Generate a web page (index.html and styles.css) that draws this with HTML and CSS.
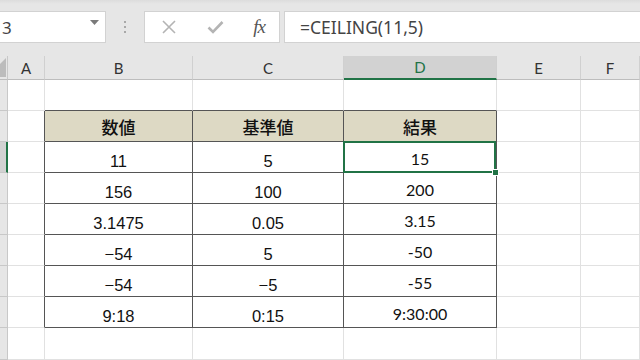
FILE: index.html
```html
<!DOCTYPE html>
<html lang="ja">
<head>
<meta charset="utf-8">
<link rel="stylesheet" href="styles.css">
</head>
<body>
<div class="toolbar">
  <div class="namebox"><span class="nb-text">3</span>
    <svg class="dd" width="9" height="5" viewBox="0 0 9 5"><path d="M0 0H9L4.5 5Z" fill="#7a7a7a"/></svg>
  </div>
  <div class="grip"><i></i><i></i><i></i></div>
  <div class="fxbox">
    <svg width="16" height="16" viewBox="0 0 16 16"><path d="M2 2L14 14M14 2L2 14" stroke="#b4b4b4" stroke-width="1.6" fill="none"/></svg>
    <svg width="17" height="14" viewBox="0 0 17 14"><path d="M1.5 7.5L6 12L15.5 2" stroke="#b4b4b4" stroke-width="2.6" fill="none"/></svg>
    <span class="fx">fx</span>
  </div>
  <div class="formula">=CEILING(11,5)</div>
</div>
<div class="sheet">
  <div class="row hdr">
    <div class="corner"></div>
    <div class="ch">A</div>
    <div class="ch">B</div>
    <div class="ch">C</div>
    <div class="ch sel">D</div>
    <div class="ch">E</div>
    <div class="ch">F</div>
  </div>
  <div class="row">
    <div class="rh"></div><div class="c"></div><div class="c tt"></div><div class="c tt"></div><div class="c tt"></div><div class="c"></div><div class="c"></div>
  </div>
  <div class="row">
    <div class="rh"></div><div class="c tl"></div><div class="c t th">数値</div><div class="c t th">基準値</div><div class="c t th">結果</div><div class="c"></div><div class="c"></div>
  </div>
  <div class="row">
    <div class="rh on"></div><div class="c tl"></div><div class="c t">11</div><div class="c t">5</div><div class="c t r cur">15</div><div class="c"></div><div class="c"></div>
  </div>
  <div class="row">
    <div class="rh"></div><div class="c tl"></div><div class="c t">156</div><div class="c t">100</div><div class="c t r">200</div><div class="c"></div><div class="c"></div>
  </div>
  <div class="row">
    <div class="rh"></div><div class="c tl"></div><div class="c t">3.1475</div><div class="c t">0.05</div><div class="c t r">3.15</div><div class="c"></div><div class="c"></div>
  </div>
  <div class="row">
    <div class="rh"></div><div class="c tl"></div><div class="c t">−54</div><div class="c t">5</div><div class="c t r">-50</div><div class="c"></div><div class="c"></div>
  </div>
  <div class="row">
    <div class="rh"></div><div class="c tl"></div><div class="c t">−54</div><div class="c t">−5</div><div class="c t r">-55</div><div class="c"></div><div class="c"></div>
  </div>
  <div class="row">
    <div class="rh"></div><div class="c tl"></div><div class="c t">9:18</div><div class="c t">0:15</div><div class="c t r">9:30:00</div><div class="c"></div><div class="c"></div>
  </div>
  <div class="row last">
    <div class="rh"></div><div class="c"></div><div class="c"></div><div class="c"></div><div class="c"></div><div class="c"></div><div class="c"></div>
  </div>
</div>
</body>
</html>
```
FILE: styles.css
```css
html, body {
  margin: 0;
  padding: 0;
}
body {
  width: 640px;
  height: 360px;
  overflow: hidden;
  background: #fff;
  font-family: "Liberation Sans", sans-serif;
}
.toolbar {
  display: flex;
  align-items: flex-start;
  height: 56px;
  box-sizing: border-box;
  padding-top: 11px;
  background: linear-gradient(#dcdcdc 0, #e6e6e6 4px, #e6e6e6 100%);
  overflow: hidden;
}
.namebox {
  flex: none;
  margin-left: -20px;
  width: 126px;
  height: 32px;
  box-sizing: border-box;
  background: #fff;
  border: 1px solid #d2d2d2;
  display: flex;
  align-items: center;
  justify-content: space-between;
  padding: 0 6px 0 21px;
  font: 17px "Noto Sans", sans-serif;
  color: #444;
}
.nb-text {
  margin-top: 1px;
}
.dd {
  margin-top: -10px;
}
.grip {
  flex: none;
  width: 38px;
  height: 32px;
  display: flex;
  flex-direction: column;
  align-items: center;
  justify-content: center;
  gap: 3px;
}
.grip i {
  display: block;
  width: 2px;
  height: 2px;
  background: #a8a8a8;
}
.fxbox {
  flex: none;
  width: 136px;
  height: 32px;
  box-sizing: border-box;
  background: #fff;
  border: 1px solid #d2d2d2;
  display: flex;
  align-items: center;
  justify-content: space-between;
  padding: 0 14px 0 16px;
}
.fx {
  font: italic 19px "Liberation Serif", serif;
  color: #555;
  letter-spacing: -1px;
}
.formula {
  flex: 1;
  margin-left: 4px;
  margin-right: -2px;
  height: 32px;
  box-sizing: border-box;
  background: #fff;
  border: 1px solid #d2d2d2;
  padding-left: 15px;
  display: flex;
  align-items: center;
  font: 17.5px "Noto Sans", sans-serif;
  color: #444;
}
.row {
  display: grid;
  grid-template-columns: 8px 37px 148px 151px 153px 84px 59px;
  height: 31px;
}
.row.last {
  height: 32px;
}
.row > div {
  box-sizing: border-box;
  display: flex;
  align-items: flex-end;
  justify-content: center;
  min-width: 0;
}
.hdr {
  height: 24px;
}
.corner {
  position: relative;
  overflow: hidden;
  background: #e6e6e6;
  border-right: 1px solid #c8c8c8;
  border-bottom: 1px solid #bdbdbd;
}
.corner::after {
  content: "";
  position: absolute;
  right: 1px;
  bottom: 2px;
  width: 19px;
  height: 19px;
  background: #bcbcbc;
  clip-path: polygon(100% 0, 100% 100%, 0 100%);
}
.ch {
  background: #e6e6e6;
  border-right: 1px solid #d0d0d0;
  border-bottom: 1px solid #bdbdbd;
  align-items: center !important;
  font: 15px Lato, sans-serif;
  color: #333;
}
.ch.sel {
  background: #d2d2d2;
  border-bottom: 2px solid #217346;
  color: #217346;
}
.rh {
  background: #e6e6e6;
  border-right: 1px solid #c8c8c8;
  border-bottom: 1px solid #c8c8c8;
}
.rh.on {
  background: #d2d2d2;
  border-right: 2px solid #217346;
}
.c {
  border-right: 1px solid #e1e1e1;
  border-bottom: 1px solid #e1e1e1;
  font-size: 16.5px;
  line-height: 18px;
  padding-bottom: 2px;
  color: #111;
}
.tt {
  border-bottom: 1px solid #555;
}
.tl {
  border-right: 1px solid #555;
}
.t {
  border-right: 1px solid #555;
  border-bottom: 1px solid #555;
}
.th {
  background: #ddd9c4;
  font-family: "Noto Sans CJK JP", sans-serif;
  font-size: 17px;
  font-weight: 500;
  align-items: center !important;
  padding: 2px 0 0;
}
.r {
  font-family: Lato, sans-serif;
  font-size: 16px;
  padding-bottom: 4px;
}
.cur {
  position: relative;
}
.cur::after {
  content: "";
  position: absolute;
  left: -1px;
  top: -1px;
  right: 0;
  bottom: -1px;
  border: 2px solid #217346;
}
.cur::before {
  content: "";
  position: absolute;
  right: -3px;
  bottom: -4px;
  width: 5px;
  height: 5px;
  background: #217346;
  border: 1px solid #fff;
  z-index: 1;
}
```
